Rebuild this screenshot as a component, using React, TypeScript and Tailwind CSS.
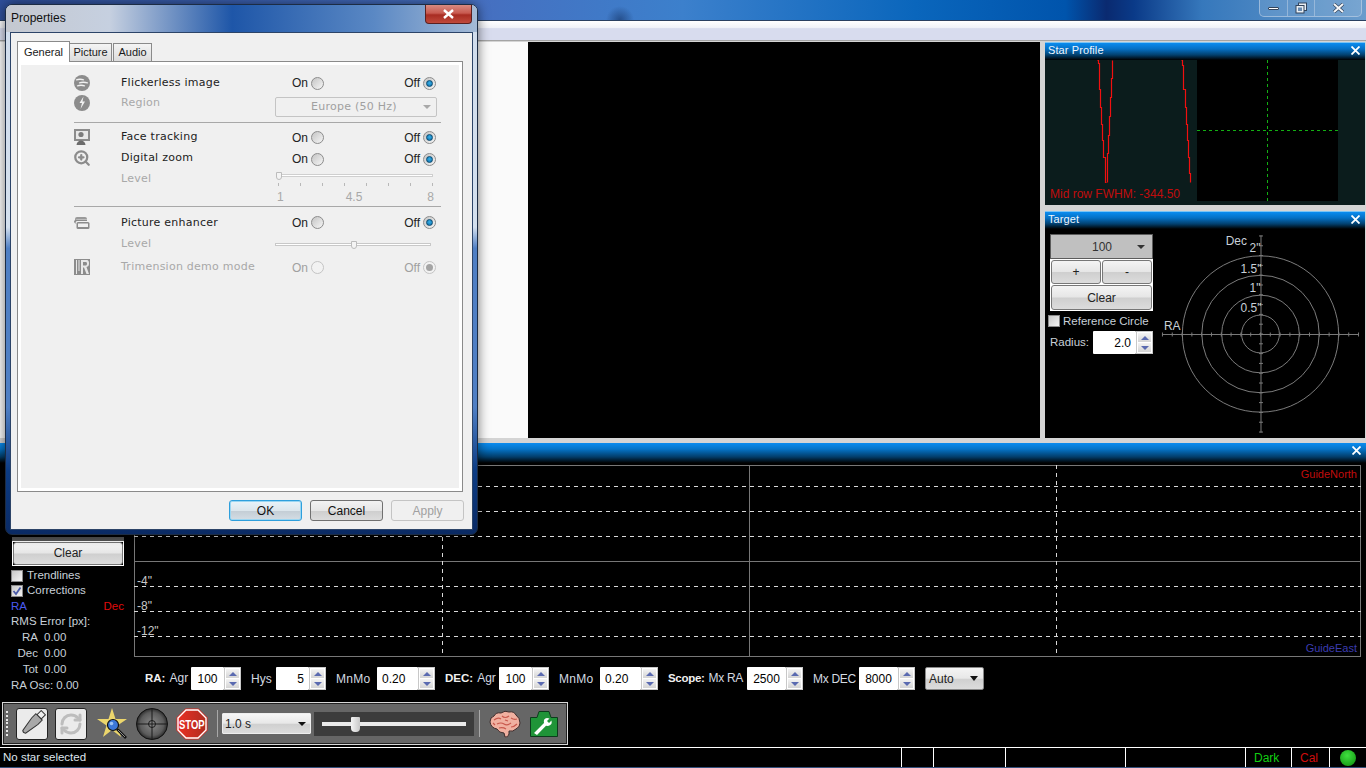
import { RefreshCw, ZoomIn } from 'lucide-react';

const sans = "font-['Liberation_Sans',Arial,sans-serif]";
const wide = "font-['DejaVu_Sans',Verdana,sans-serif]";
const tabFont = "font-['Liberation_Sans',Arial,sans-serif] text-[11px] text-[#1a1a1a]";

function CloseX() {
  return (
    <svg width="9" height="9" viewBox="0 0 9 9" className="shrink-0">
      <path d="M0.5 0.5 L8.5 8.5 M8.5 0.5 L0.5 8.5" stroke="#fff" strokeWidth="1.8" />
    </svg>
  );
}

function PaneTitle({ title }: { title: string }) {
  return (
    <div className="flex h-[18px] shrink-0 items-center justify-between border-t border-[#7cc4f4] bg-[linear-gradient(180deg,#0a8cf0_0%,#0570c4_35%,#02406e_70%,#000_100%)] pb-[3px] pl-[3px] pr-[5px] text-[11px] leading-[14px] tracking-[0.1px] text-[#eef6ff]">
      <span>{title}</span>
      <CloseX />
    </div>
  );
}

function SpinArrows() {
  return (
    <div className="flex w-[17px] shrink-0 flex-col gap-px border border-[#c8c8c8] bg-white p-px">
      <div className="flex flex-1 items-center justify-center bg-[linear-gradient(180deg,#f4f4f4,#d4d4d4)]">
        <div className="h-0 w-0 border-x-[4px] border-b-[4px] border-x-transparent border-b-[#5a6ab0]" />
      </div>
      <div className="flex flex-1 items-center justify-center bg-[linear-gradient(180deg,#f4f4f4,#d4d4d4)]">
        <div className="h-0 w-0 border-x-[4px] border-t-[4px] border-x-transparent border-t-[#5a6ab0]" />
      </div>
    </div>
  );
}

function Spinner({ value, width, align = 'center' }: { value: string; width: string; align?: string }) {
  return (
    <div className="flex h-[23px] shrink-0">
      <div className={`flex h-full items-center rounded-[1px] bg-white px-[5px] text-[12px] text-black ${width} ${align === 'right' ? 'justify-end' : align === 'left' ? 'justify-start' : 'justify-center'}`}>
        {value}
      </div>
      <SpinArrows />
    </div>
  );
}

function Checkbox({ checked }: { checked?: boolean }) {
  return (
    <div className="flex h-[12px] w-[12px] shrink-0 items-center justify-center border border-[#8a8a8a] bg-[linear-gradient(135deg,#c8c8c8,#f4f4f4)]">
      {checked && (
        <svg width="10" height="10" viewBox="0 0 10 10">
          <path d="M1.5 5 L4 8 L8.5 1.5" fill="none" stroke="#4a5aa8" strokeWidth="1.8" />
        </svg>
      )}
    </div>
  );
}

function GlossButton({ label, className }: { label: string; className: string }) {
  return (
    <div className={`flex items-center justify-center rounded-[3px] border border-[#777] bg-[linear-gradient(180deg,#f4f4f4_0%,#e6e6e6_48%,#cfcfcf_52%,#dcdcdc_100%)] text-[12px] text-[#222] ${className}`}>
      {label}
    </div>
  );
}

function Radio({ selected, disabled }: { selected?: boolean; disabled?: boolean }) {
  return (
    <div className={`flex h-[13px] w-[13px] shrink-0 items-center justify-center rounded-full border ${disabled ? 'border-[#c4c4c4] bg-[#f2f2f2]' : 'border-[#8c8c8c] bg-[linear-gradient(135deg,#c4c4c4,#f6f6f6)]'}`}>
      {selected && (
        <div className={`h-[7px] w-[7px] rounded-full ${disabled ? 'bg-[#a4a4a4]' : 'border border-[#0a4a70] bg-[radial-gradient(circle_at_50%_40%,#38b0e8,#0a6ca8)]'}`} />
      )}
    </div>
  );
}

function OnOff({ disabled, nudge = '' }: { disabled?: boolean; nudge?: string }) {
  const text = disabled ? 'text-[#a0a0a0]' : 'text-[#222]';
  return (
    <div className={`flex h-full items-center justify-between pl-[17px] text-[12px] ${sans} ${text} ${nudge}`}>
      <div className="flex items-center gap-[3px]">
        <span>On</span>
        <Radio disabled={disabled} />
      </div>
      <div className="flex items-center gap-[3px] pr-px">
        <span>Off</span>
        <Radio selected disabled={disabled} />
      </div>
    </div>
  );
}

function FlickerIcon() {
  return (
    <svg width="16" height="16" viewBox="0 0 16 16">
      <circle cx="8" cy="8" r="8" fill="#8c8c8c" />
      <path d="M2 5 Q6 3.5 10 5 M5 8 Q9 6.5 14 8 M3 11 Q7 9.5 11 11" fill="none" stroke="#f0f0f0" strokeWidth="1.3" />
    </svg>
  );
}
function GlobeIcon() {
  return (
    <svg width="16" height="16" viewBox="0 0 16 16">
      <circle cx="8" cy="8" r="8" fill="#8c8c8c" />
      <path d="M9.5 1.5 L5.5 8 L8 8 L6.5 14 L11 6.5 L8.5 6.5 Z" fill="#f0f0f0" />
    </svg>
  );
}
function FaceIcon() {
  return (
    <svg width="16" height="16" viewBox="0 0 16 16">
      <rect x="0" y="0" width="16" height="12" fill="#8c8c8c" />
      <rect x="2" y="2" width="12" height="8" fill="#e8e8e8" />
      <circle cx="7" cy="5.5" r="2.6" fill="#7c7c7c" />
      <path d="M2.5 16 C3 10 11 10 11.5 16 Z" fill="#6c6c6c" />
    </svg>
  );
}
function EnhancerIcon() {
  return (
    <svg width="16" height="14" viewBox="0 0 16 14">
      <path d="M1 3 Q1 1 3 1 H11 Q13 1 13 3 H4 Q1 3 1 6 Z" fill="#9a9a9a" />
      <path d="M0 6 Q0 3.5 3 3.5 H13 V5 H3 Q1.5 5 1.5 8 Z" fill="#8c8c8c" />
      <rect x="2.5" y="6" width="13" height="7" rx="1.5" fill="#8c8c8c" />
      <rect x="4" y="7.5" width="10" height="3.5" fill="#f0f0f0" />
    </svg>
  );
}
function TrimensionIcon() {
  return (
    <svg width="16" height="16" viewBox="0 0 16 16">
      <rect width="16" height="16" fill="#8c8c8c" />
      <rect x="2" y="1" width="1" height="14" fill="#e8e8e8" />
      <rect x="4.5" y="1" width="1" height="11" fill="#e8e8e8" />
      <path d="M7 1 H13 Q15 1 15 4.5 Q15 7.5 12.5 8 L15 15 H12.5 L10 8.5 H9 V15 H7 Z M9 3 V6.5 H12 Q13 6.5 13 4.5 Q13 3 12 3 Z" fill="#e8e8e8" fillRule="evenodd" />
    </svg>
  );
}

function DialogRow({ icon, label, disabled, children, className = 'h-[20px]', labelClass = '' }: { icon?: React.ReactNode; label: string; disabled?: boolean; children?: React.ReactNode; className?: string; labelClass?: string }) {
  return (
    <div className={`flex pl-[56px] ${className}`}>
      <div className="flex h-[20px] w-[47px] shrink-0 items-center">{icon}</div>
      <div className={`flex h-[20px] w-[154px] shrink-0 items-center text-[11px] tracking-[0.25px] ${wide} ${disabled ? 'text-[#a8a8a8]' : 'text-[#222]'} ${labelClass}`}>{label}</div>
      <div className="w-[162px] shrink-0">{children}</div>
    </div>
  );
}

function DialogButton({ label, primary, disabled }: { label: string; primary?: boolean; disabled?: boolean }) {
  const look = primary
    ? 'border-[#2e9fdc] bg-[linear-gradient(180deg,#e8f4fa_0%,#dce6ec_50%,#c4ced6_55%,#d4dde4_100%)] text-[#111] shadow-[inset_0_0_0_1px_#9ad6f2]'
    : disabled
      ? 'border-[#c4c4c4] bg-[#f0f0f0] text-[#a0a0a0]'
      : 'border-[#707070] bg-[linear-gradient(180deg,#f2f2f2_0%,#e6e6e6_50%,#cfcfcf_55%,#dcdcdc_100%)] text-[#111]';
  return <div className={`flex h-[21px] w-[73px] items-center justify-center rounded-[3px] border text-[12px] ${look}`}>{label}</div>;
}

function PropertiesDialog() {
  return (
    <div className={`absolute left-[5px] top-[4px] flex h-[531px] w-[473px] flex-col rounded-[7px] border border-[#1c2c44] bg-[linear-gradient(180deg,#d0dcec_0%,#d4e0ee_42%,#4f7fc4_46%,#4f7fc4_76%,#0c3c84_88%,#0a2a64_100%)] px-[4px] pb-[4px] shadow-[0_0_12px_rgba(0,0,0,0.55)] ${sans}`}>
      <div className="-mx-[4px] flex h-[27px] shrink-0 items-start justify-between rounded-t-[6px] bg-[linear-gradient(90deg,#c4c8d0_0%,#c6d0e0_22%,#1e56a8_48%,#5a88c4_78%,#a4bad6_100%)] pl-[5px] pr-[5px]">
        <span className="mt-[5px] text-[12px] leading-[16px] text-[#111]">Properties</span>
        <div className="flex h-[19px] w-[47px] items-center justify-center rounded-b-[4px] border border-t-0 border-[#5a2020] bg-[linear-gradient(180deg,#d88a80_0%,#c85a50_45%,#a82c22_55%,#c04a3c_100%)]">
          <svg width="13" height="10" viewBox="0 0 13 10">
            <path d="M2 1 L11 9 M11 1 L2 9" stroke="#fff" strokeWidth="2.4" />
          </svg>
        </div>
      </div>
      <div className="flex flex-1 flex-col border border-[#2c4468] bg-[#f0f0f0] pl-[6px] pr-[9px] pt-[7px]">
        <div className={`flex h-[21px] items-end ${tabFont}`}>
          <div className="relative z-10 -mb-px flex h-[21px] w-[53px] items-center justify-center border border-b-0 border-[#8a8a8a] bg-white">General</div>
          <div className="flex h-[18px] w-[42px] items-center justify-center border border-b-0 border-l-0 border-[#8a8a8a] bg-[linear-gradient(180deg,#f4f4f4,#dcdcdc)]">Picture</div>
          <div className="ml-px flex h-[18px] w-[39px] items-center justify-center border border-b-0 border-[#8a8a8a] bg-[linear-gradient(180deg,#f4f4f4,#dcdcdc)]">Audio</div>
        </div>
        <div className="h-[431px] border border-[#8a8a8a] bg-[#f0f0f0] pt-[11px] shadow-[inset_0_0_0_3px_#fff]">
          <DialogRow icon={<FlickerIcon />} label="Flickerless image">
            <OnOff />
          </DialogRow>
          <DialogRow icon={<GlobeIcon />} label="Region" disabled>
            <div className={`mt-[4px] flex h-[20px] items-center rounded-[2px] border border-[#c4c4c4] pl-[35px] pr-[5px] text-[11px] tracking-[0.25px] text-[#a0a0a0] ${wide}`}>
              <span className="flex-1">Europe (50 Hz)</span>
              <div className="h-0 w-0 border-x-[4px] border-t-[4px] border-x-transparent border-t-[#a8a8a8]" />
            </div>
          </DialogRow>
          <div className="ml-[56px] mr-[21px] mt-[9px] h-px bg-[#a8a8a8]" />
          <DialogRow className="mt-[4px] h-[20px]" icon={<FaceIcon />} label="Face tracking">
            <OnOff nudge="pt-px" />
          </DialogRow>
          <DialogRow className="mt-px h-[20px]" icon={<ZoomIn size={18} color="#8c8c8c" strokeWidth={3} className="-ml-px" />} label="Digital zoom">
            <OnOff nudge="pt-[2px]" />
          </DialogRow>
          <DialogRow className="h-[38px]" label="Level" disabled labelClass="pt-[2px]">
            <div className={`pl-[3px] pr-[4px] pt-[6px] text-[12px] text-[#a8a8a8] ${sans}`}>
              <div className="relative h-[3px] border border-[#cfcfcf] bg-white">
                <div className="absolute -left-[3px] -top-[3px] h-[8px] w-[6px] rounded-b-[3px] border border-[#bcbcbc] bg-[#f4f4f4]" />
              </div>
              <div className="mt-[6px] flex justify-between">
                {[0, 1, 2, 3, 4, 5, 6, 7].map((i) => (
                  <div key={i} className="h-[3px] w-px bg-[#b8b8b8]" />
                ))}
              </div>
              <div className="-mx-[1px] mt-[4px] flex justify-between leading-[14px]">
                <span>1</span>
                <span className="mr-[3px]">4.5</span>
                <span>8</span>
              </div>
            </div>
          </DialogRow>
          <div className="ml-[56px] mr-[21px] h-px bg-[#a8a8a8]" />
          <DialogRow className="mt-[6px] h-[20px]" icon={<EnhancerIcon />} label="Picture enhancer">
            <OnOff nudge="pb-[1px]" />
          </DialogRow>
          <DialogRow className="mt-px h-[20px]" label="Level" disabled>
            <div className="relative mr-[6px] mt-[9px] h-[3px] border border-[#c8c8c8] bg-white">
              <div className="absolute -top-[3px] left-[75px] h-[8px] w-[6px] rounded-b-[3px] border border-[#bcbcbc] bg-[#f4f4f4]" />
            </div>
          </DialogRow>
          <DialogRow className="mt-[3px] h-[20px]" icon={<TrimensionIcon />} label="Trimension demo mode" disabled>
            <OnOff disabled nudge="pt-px" />
          </DialogRow>
        </div>
        <div className="-mr-px mt-[8px] flex justify-end gap-[8px]">
          <DialogButton label="OK" primary />
          <DialogButton label="Cancel" />
          <DialogButton label="Apply" disabled />
        </div>
      </div>
    </div>
  );
}

function StarProfile() {
  const a = '52,0 53,0 53,3 54,3 54,29 55,29 55,47 56,47 56,64 57,64 57,80 58,80 58,97 60,97 60,122 61,122';
  const b = '67,0 67,18 66,18 66,37 65,37 65,56 64,56 64,75 63,75 63,93 62,93 62,122';
  const c = '136,0 137,0 137,5 138,5 138,29 140,29 140,47 141,47 141,64 142,64 142,80 143,80 143,97 144,97 144,113 145,113 145,122';
  return (
    <svg width="320" height="145" viewBox="0 0 320 145" className="block">
      <rect width="320" height="145" fill="#0b1c1c" />
      <rect x="152" width="141" height="141" fill="#000" />
      <path d="M222.5 0 V141" stroke="#12b012" strokeDasharray="3 3" />
      <path d="M152 70.5 H293" stroke="#12b012" strokeDasharray="3 3" />
      <g transform="translate(0.5 0.5)" fill="none" stroke="#f01010" strokeWidth="1.2">
        <polyline points={a} />
        <polyline points={b} />
        <polyline points={c} />
      </g>
      <text x="5" y="138" fontSize="12" fill="#c00c0c" fontFamily="Liberation Sans">Mid row FWHM: -344.50</text>
    </svg>
  );
}

function TargetPlot() {
  const cx = 108;
  const cy = 105;
  const ticks = Array.from({ length: 21 }, (_, i) => (i - 10) * 9.85);
  const labels: [string, number, number][] = [['2"', 97, 23], ['1.5"', 88, 44], ['1"', 97, 63], ['0.5"', 88, 83]];
  return (
    <svg width="213" height="209" viewBox="0 0 213 209" className="block">
      {[19, 39, 59, 78.5].map((r) => (
        <circle key={r} cx={cx} cy={cy} r={r} fill="none" stroke="#7c7c7c" />
      ))}
      <path d={`M${cx + 0.5} 6 V204 M9 ${cy + 0.5} H207`} stroke="#7c7c7c" />
      {ticks.map((t) => (
        <path key={t} d={`M${cx + t} ${cy - 1.5} v4 M${cx - 1.5} ${cy + t} h4`} stroke="#7c7c7c" />
      ))}
      <g fontFamily="Liberation Sans" fontSize="12" fill="#c8d0d8">
        <text x="73" y="15.5">Dec</text>
        <text x="11" y="100.5">RA</text>
        {labels.map(([t, x, y]) => (
          <text key={t} x={x} y={y}>{t}</text>
        ))}
      </g>
    </svg>
  );
}

function TargetPane() {
  return (
    <div className="mt-[5px] flex h-[227px] flex-col bg-black">
      <PaneTitle title="Target" />
      <div className="flex flex-1">
        <div className="flex w-[108px] shrink-0 flex-col pl-[5px] pt-[5px]">
          <div className="flex h-[25px] w-[103px] items-center border border-[#5c5c5c] bg-[#c0c0c0] pl-[41px] text-[12px] text-[#333]">
            <span className="flex-1">100</span>
            <div className="mr-[7px] h-0 w-0 border-x-[4px] border-t-[4px] border-x-transparent border-t-[#333]" />
          </div>
          <div className="flex w-[103px] flex-col gap-px bg-white p-px">
            <div className="flex gap-px">
              <GlossButton label="+" className="h-[24px] flex-1" />
              <GlossButton label="-" className="h-[24px] flex-1" />
            </div>
            <GlossButton label="Clear" className="h-[25px]" />
          </div>
          <div className="-ml-[2px] mt-[3px] flex items-center gap-[3px] text-[11.5px] leading-[14px] text-[#c8d0d8]">
            <Checkbox />
            <span>Reference Circle</span>
          </div>
          <div className="mt-[3px] flex items-center text-[11.5px] text-[#c8d0d8]">
            <span className="w-[43px]">Radius:</span>
            <Spinner value="2.0" width="w-[43px]" align="right" />
          </div>
        </div>
        <TargetPlot />
      </div>
    </div>
  );
}

function GuideGraph() {
  const dashed = [21, 46, 71, 121, 146, 171];
  return (
    <svg width="1227" height="192" viewBox="0 0 1227 192" className="block" shapeRendering="crispEdges">
      <rect x="0.5" y="0.5" width="1226" height="191" fill="#000" stroke="#777" />
      <path d="M615.5 0 V192 M0 96.5 H1227" stroke="#777" />
      {dashed.map((y) => (
        <path key={y} d={`M0 ${y + 0.5} H1227`} stroke="#d8d8d8" strokeDasharray="4 4" />
      ))}
      <path d="M308.5 0 V192 M922.5 0 V192" stroke="#d8d8d8" strokeDasharray="4 4" />
      <g fontFamily="Liberation Sans" fontSize="12" shapeRendering="auto">
        <text x="3" y="120" fill="#c8c8c8">-4"</text>
        <text x="3" y="145" fill="#c8c8c8">-8"</text>
        <text x="3" y="170" fill="#c8c8c8">-12"</text>
        <text x="1223" y="13" textAnchor="end" fontSize="11" fill="#c00c0c">GuideNorth</text>
        <text x="1223" y="187" textAnchor="end" fontSize="11" fill="#3c3cb0">GuideEast</text>
      </g>
    </svg>
  );
}

function LeftControls() {
  return (
    <div className="w-[134px] shrink-0 pl-[11px] pr-[9px] pt-[74px] text-[11.5px] leading-[15px] text-[#c8d0d8]">
      <div className="ml-px mr-px h-[4px] bg-[#555]" />
      <div className="ml-px mr-px border border-white">
        <GlossButton label="Clear" className="h-[23px]" />
      </div>
      <div className="mt-[2px] flex h-[15px] items-center gap-[4px]">
        <Checkbox />
        <span>Trendlines</span>
      </div>
      <div className="flex h-[15px] items-center gap-[4px]">
        <Checkbox checked />
        <span>Corrections</span>
      </div>
      <div className="mt-px flex h-[15px] items-center justify-between pr-px">
        <span className="text-[#4a5af0]">RA</span>
        <span className="text-[#e00c0c]">Dec</span>
      </div>
      <div className="h-[16px]">RMS Error [px]:</div>
      {[['RA', '0.00'], ['Dec', '0.00'], ['Tot', '0.00']].map(([k, v]) => (
        <div key={k} className="flex h-[16px] gap-[6px]">
          <span className="w-[27px] text-right">{k}</span>
          <span>{v}</span>
        </div>
      ))}
      <div className="h-[16px]">RA Osc: 0.00</div>
    </div>
  );
}

function ControlLabel({ bold, text, className }: { bold?: string; text: string; className: string }) {
  return (
    <span className={`shrink-0 text-[12px] text-[#d4dae0] ${className}`}>
      {bold && <b className="mr-[4px] text-[11.5px] text-[#f0f0f0]">{bold}</b>}
      {text}
    </span>
  );
}

function ControlRow() {
  return (
    <div className="mt-[10px] flex h-[23px] items-center pl-[11px]">
      <ControlLabel bold="RA:" text="Agr" className="mr-[5px] w-[41px]" />
      <Spinner value="100" width="w-[33px]" />
      <ControlLabel text="Hys" className="ml-[10px] mr-[5px] w-[20px]" />
      <Spinner value="5" width="w-[33px]" align="right" />
      <ControlLabel text="MnMo" className="ml-[10px] mr-[5px] w-[36px] tracking-[0.3px]" />
      <Spinner value="0.20" width="w-[41px]" align="left" />
      <ControlLabel bold="DEC:" text="Agr" className="ml-[10px] mr-[5px] w-[49px] whitespace-nowrap" />
      <Spinner value="100" width="w-[33px]" />
      <ControlLabel text="MnMo" className="ml-[10px] mr-[5px] w-[36px] tracking-[0.3px]" />
      <Spinner value="0.20" width="w-[41px]" align="left" />
      <ControlLabel bold="Scope:" text="Mx RA" className="ml-[10px] mr-[5px] w-[74px] whitespace-nowrap tracking-[-0.3px]" />
      <Spinner value="2500" width="w-[39px] !px-[3px]" />
      <ControlLabel text="Mx DEC" className="ml-[10px] mr-[5px] w-[41px] whitespace-nowrap tracking-[-0.3px]" />
      <Spinner value="8000" width="w-[39px] !px-[3px]" />
      <div className="ml-[10px] flex h-[23px] w-[59px] items-center justify-between rounded-[2px] border border-[#888] bg-[linear-gradient(180deg,#f4f4f4_0%,#e8e8e8_48%,#d0d0d0_55%,#dcdcdc_100%)] pl-[3px] pr-[5px] text-[12px] text-[#222]">
        <span>Auto</span>
        <div className="h-0 w-0 border-x-[4px] border-t-[5px] border-x-transparent border-t-[#111]" />
      </div>
    </div>
  );
}

function ToolButton({ children }: { children: React.ReactNode }) {
  return <div className="flex h-[32px] w-[32px] shrink-0 items-center justify-center rounded-[3px] border border-[#222] bg-[#ebebeb]">{children}</div>;
}

function UsbIcon() {
  return (
    <svg width="28" height="28" viewBox="0 0 28 28">
      <g transform="rotate(45 14 14)">
        <rect x="11" y="-2" width="6" height="6" fill="#f0f0f0" stroke="#333" />
        <path d="M9.5 4 H18.5 V10 L16 25 Q14 27 12 25 L9.5 10 Z" fill="#a8a8a8" stroke="#333" />
      </g>
    </svg>
  );
}

function LoopIcon() {
  return (
    <svg width="32" height="32" viewBox="0 0 32 32">
      <path d="M16 0 L19.5 11 H31 L21.5 17.5 L25 29 L16 22 L7 29 L10.5 17.5 L1 11 H12.5 Z" fill="#ecd66c" />
      <path d="M21 21 L30 30" stroke="#111" strokeWidth="2.6" />
      <path d="M22 22 L29 29" stroke="#aaa" strokeWidth="0.8" />
      <circle cx="17" cy="17" r="5.5" fill="#3c78d8" stroke="#111" strokeWidth="1.2" />
      <circle cx="15.5" cy="15.5" r="1.8" fill="#9cc4f4" />
    </svg>
  );
}

function ScopeIcon() {
  return (
    <svg width="32" height="32" viewBox="0 0 32 32">
      <defs>
        <radialGradient id="scope">
          <stop offset="0%" stopColor="#8a8a8a" />
          <stop offset="75%" stopColor="#5c5c5c" />
          <stop offset="100%" stopColor="#2c2c2c" />
        </radialGradient>
      </defs>
      <circle cx="16" cy="16" r="15.5" fill="url(#scope)" stroke="#111" />
      <path d="M16 0 V32 M0 16 H32" stroke="#1a1a1a" />
      <circle cx="16" cy="16" r="3.5" fill="none" stroke="#1a1a1a" />
    </svg>
  );
}

function StopIcon() {
  return (
    <svg width="32" height="32" viewBox="0 0 32 32">
      <defs>
        <linearGradient id="stop" x1="0" x2="1" y1="0" y2="0">
          <stop offset="0%" stopColor="#e83024" />
          <stop offset="100%" stopColor="#b02c20" />
        </linearGradient>
      </defs>
      <polygon points="9.5,0.5 22.5,0.5 31.5,9.5 31.5,22.5 22.5,31.5 9.5,31.5 0.5,22.5 0.5,9.5" fill="#d82a20" />
      <polygon points="10,2 22,2 30,10 30,22 22,30 10,30 2,22 2,10" fill="url(#stop)" stroke="#fff" strokeWidth="1.4" />
      <text transform="translate(3 21) scale(0.95 1.35)" fontSize="10" fontWeight="700" fill="#fff" fontFamily="Liberation Sans">STOP</text>
    </svg>
  );
}

function BrainIcon() {
  return (
    <svg width="32" height="30" viewBox="0 0 32 30">
      <path d="M1 13 Q1 8 5 7 Q7 3 12 4 Q16 1 20 3 Q25 2 27 6 Q31 9 31 14 Q31 18 27 20 Q24 23 20 22 L20 25 Q19 29 16 28 L15 24 Q10 24 8 20 Q2 19 1 13 Z" fill="#f0b0a0" stroke="#3c2c2c" />
      <path d="M5 11 Q9 8 12 10 M13 7 Q16 10 20 7 M8 15 Q12 13 15 15 Q18 17 22 14 M22 9 Q25 11 28 10 M10 19 Q14 18 17 20 M22 18 Q25 18 28 15 M4 14 L6 16 M16 11 L19 12" fill="none" stroke="#c8584c" strokeWidth="1.2" />
    </svg>
  );
}

function CameraIcon() {
  return (
    <svg width="28" height="26" viewBox="0 0 28 26" className="shrink-0">
      <path d="M0.5 6.5 H7 L9 0.5 H19 L21 6.5 H27.5 V25.5 H0.5 Z" fill="#1f9438" stroke="#0c3c1c" />
      <path d="M4 22 L14 12 Q13 7.5 17 7 L19.5 7.5 L17 10 L19 12 L21.5 9.5 Q22.5 14 18 15 L16 14.8 L7 24 Z" fill="#fff" />
    </svg>
  );
}

function Toolbar() {
  return (
    <div className="flex h-[43px] w-[566px] items-center border border-[#d8d8d8] bg-[#666] shadow-[inset_0_0_0_1px_#222]">
      <div className="ml-[3px] flex h-[25px] w-[3px] flex-col justify-between">
        {[0, 1, 2, 3, 4, 5, 6].map((i) => (
          <div key={i} className="h-[2px] w-[2px] bg-[#e8e8e8]" />
        ))}
      </div>
      <div className="ml-[7px]">
        <ToolButton><UsbIcon /></ToolButton>
      </div>
      <div className="ml-[7px]">
        <ToolButton><RefreshCw size={24} color="#bdbdbd" strokeWidth={3} /></ToolButton>
      </div>
      <div className="ml-[9px]"><LoopIcon /></div>
      <div className="ml-[8px]"><ScopeIcon /></div>
      <div className="ml-[8px]"><StopIcon /></div>
      <div className="ml-[9px] h-[27px] w-px bg-[#a8a8a8]" />
      <div className="ml-[4px] flex h-[21px] w-[89px] items-center justify-between rounded-[1px] border border-[#eee] bg-[linear-gradient(180deg,#f6f6f6_0%,#e8e8e8_48%,#d0d0d0_55%,#dcdcdc_100%)] pl-[2px] pr-[4px] text-[12px] text-[#222]">
        <span>1.0 s</span>
        <div className="h-0 w-0 border-x-[4px] border-t-[4px] border-x-transparent border-t-[#111]" />
      </div>
      <div className="ml-[3px] flex h-[24px] w-[160px] items-center bg-[#3c3c3c] px-[8px]">
        <div className="relative h-[4px] w-full bg-[#eaeaea]">
          <div className="absolute -top-[5px] left-[29px] h-[15px] w-[9px] rounded-b-[4px] rounded-t-[1px] bg-[linear-gradient(90deg,#f4f4f4,#c8c8c8)]" />
        </div>
      </div>
      <div className="ml-[5px] h-[27px] w-px bg-[#a8a8a8]" />
      <div className="ml-[9px]"><BrainIcon /></div>
      <div className="ml-[9px]"><CameraIcon /></div>
    </div>
  );
}

function StatusBar() {
  const cells = [
    { w: 'w-[902px]', body: <span className="pl-[3px] text-[11.5px] text-[#dfe6ee]">No star selected</span> },
    { w: 'w-[32px]' },
    { w: 'w-[72px]' },
    { w: 'w-[120px]' },
    { w: 'w-[120px]' },
    { w: 'w-[46px]', body: <span className="pl-[8px] text-[#12d012]">Dark</span> },
    { w: 'w-[38px]', body: <span className="pl-[8px] text-[#d00c0c]">Cal</span> },
  ];
  return (
    <div className="flex h-[21px] border-t border-white bg-[linear-gradient(180deg,#000_95%,#34507c_95%)] text-[12px]">
      {cells.map((c, i) => (
        <div key={i} className={`flex h-[19px] shrink-0 items-center border-r border-white ${c.w}`}>
          {c.body}
        </div>
      ))}
      <div className="flex h-[19px] flex-1 items-center pl-[10px]">
        <div className="h-[16px] w-[16px] rounded-full bg-[radial-gradient(circle_at_45%_35%,#40e040,#0c8c0c)]" />
      </div>
    </div>
  );
}

function CaptionBar() {
  return (
    <div className="flex h-[20px] items-start justify-end bg-[radial-gradient(circle_at_620px_20px,rgba(20,50,100,0.6)_0px,rgba(20,50,100,0)_14px),linear-gradient(90deg,#2f4f9a_0%,#466fc0_35%,#3c80cc_50%,#0a66bc_67%,#0054ac_78%,#0a2a70_81%,#0a3a88_83%,#3678bc_88%,#6a9ccc_100%)] pr-[4px]">
      <div className="flex h-[17px] rounded-b-[5px] border border-t-0 border-[#c4d4e8]/60 bg-white/10">
        <div className="flex w-[28px] items-center justify-center border-r border-[#c4d4e8]/50">
          <div className="h-[3px] w-[11px] rounded-[1px] border border-[#33445c] bg-white" />
        </div>
        <div className="flex w-[27px] items-center justify-center border-r border-[#c4d4e8]/50">
          <svg width="12" height="12" viewBox="0 0 12 12">
            <rect x="3.5" y="1" width="8" height="7.5" fill="#e8eef4" stroke="#33445c" />
            <rect x="1" y="3.5" width="8" height="7.5" fill="#e8eef4" stroke="#33445c" />
            <rect x="3" y="5.5" width="4" height="3.5" fill="#6a8cb0" />
          </svg>
        </div>
        <div className="flex w-[46px] items-center justify-center">
          <svg width="13" height="10" viewBox="0 0 13 10">
            <path d="M2 1 L11 9 M11 1 L2 9" stroke="#33445c" strokeWidth="3.4" />
            <path d="M2 1 L11 9 M11 1 L2 9" stroke="#f4f6f8" strokeWidth="2" />
          </svg>
        </div>
      </div>
    </div>
  );
}

export default function App() {
  return (
    <div className={`relative flex h-[768px] w-[1366px] flex-col overflow-hidden bg-black ${sans}`}>
      <CaptionBar />
      <div className="h-[21px] shrink-0 border-y border-t-[#2a4060] border-b-[#a4a4a4] bg-[linear-gradient(180deg,#fff_0%,#f0f2f8_35%,#d8dcee_40%,#d8dcee_100%)]" />
      <div className="flex h-[402px] shrink-0 bg-[#d4d4d4] pt-px">
        <div className="h-[396px] w-[528px] shrink-0 bg-[#fafafa]" />
        <div className="h-[396px] w-[512px] shrink-0 bg-black" />
        <div className="w-[326px] shrink-0 pl-[5px] pr-px">
          <div className="flex h-[164px] flex-col overflow-hidden">
            <PaneTitle title="Star Profile" />
            <StarProfile />
          </div>
          <TargetPane />
        </div>
      </div>
      <div className="flex h-[257px] shrink-0 flex-col">
        <div className="flex h-[20px] shrink-0 items-start justify-end bg-[linear-gradient(180deg,#0a8cf0_0%,#0574c8_30%,#023c68_70%,#000_100%)] pr-[5px] pt-[3px]">
          <CloseX />
        </div>
        <div className="flex flex-1">
          <LeftControls />
          <div className="pt-[2px]">
            <GuideGraph />
            <ControlRow />
          </div>
        </div>
      </div>
      <div className="h-[47px] shrink-0 pl-[2px] pt-[2px]">
        <Toolbar />
      </div>
      <StatusBar />
      <PropertiesDialog />
    </div>
  );
}
